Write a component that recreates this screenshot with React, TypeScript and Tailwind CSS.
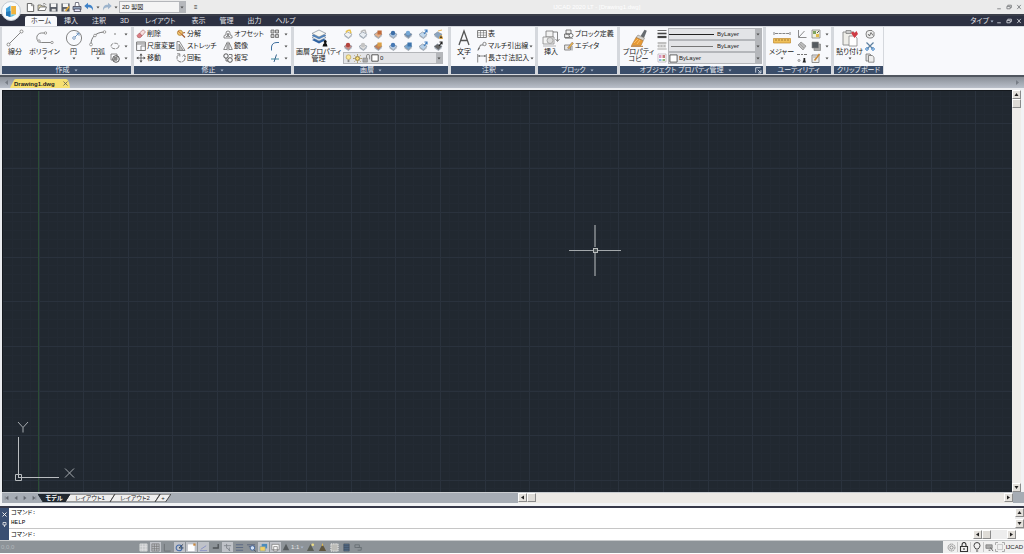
import React from "react";

type P = React.ReactNode;

const Svg = ({ w = 10, h, vb, children }: { w?: number; h?: number; vb?: string; children: P }) => (
  <svg width={w} height={h ?? w} viewBox={vb ?? "0 0 10 10"} fill="none" className="block shrink-0" aria-hidden="true">
    {children}
  </svg>
);

const Caret = ({ light = false }: { light?: boolean }) => (
  <svg width="4" height="3" viewBox="0 0 4 3" className="block shrink-0" aria-hidden="true">
    <path d="M0.5 0.5h3L2 2.5z" fill={light ? "#a9b8cc" : "#4a4a4a"} />
  </svg>
);

const page = (
  <Svg w={9}>
    <path d="M1.5.5h5l2 2v7h-7z" fill="#fff" stroke="#555" />
    <path d="M6 1v2h2" stroke="#555" strokeWidth=".7" />
  </Svg>
);
const folder = (
  <Svg w={10}>
    <path d="M1 8.5V3h3l1 1h3v4.5z" fill="#e8dfb8" stroke="#666" strokeWidth=".8" />
    <path d="M1 8.5l2-3.5h6.5L8 8.5z" fill="#fff" stroke="#666" strokeWidth=".8" />
    <path d="M6 2q2-1.5 3 .8" stroke="#666" strokeWidth=".7" />
  </Svg>
);
const disk = (
  <Svg w={9}>
    <path d="M.5.5h9v9h-9z" fill="#555a63" />
    <path d="M2 .5h6v4H2z" fill="#f5f5f5" />
    <path d="M3 6.5h4.5v3H3z" fill="#dcdcdc" />
  </Svg>
);
const diskPen = (
  <Svg w={9}>
    <path d="M.5.5h9v9h-9z" fill="#555a63" />
    <path d="M2 .5h6v4H2z" fill="#f5f5f5" />
    <path d="M3 6.5h3v3H3z" fill="#dcdcdc" />
    <path d="M5 9l4-5" stroke="#e2a938" strokeWidth="1.8" />
  </Svg>
);
const printer = (
  <Svg w={10}>
    <path d="M3 4.500L3.500.5h3l.8 4" fill="#fff" stroke="#556" strokeWidth=".8" />
    <path d="M1 4.500h8v3.200H1z" fill="#8fa0b8" stroke="#445" strokeWidth=".8" />
    <path d="M2.500 7h5.500l.7 2.500H2z" fill="#eef" stroke="#445" strokeWidth=".8" />
  </Svg>
);
const undo = (c: string) => (
  <Svg w={10}>
    <path d="M.3 4L4 .8v2c3.500-.1 5.300 1.800 5 6C8.200 6.300 6.700 5.300 4 5.300v2z" fill={c} />
  </Svg>
);

const bigLine = (
  <Svg w={18} vb="0 0 18 18">
    <path d="M3 15L15 3" stroke="#777" strokeWidth=".9" />
    <circle cx="2.500" cy="15.500" r="1.500" fill="#fff" stroke="#777" strokeWidth=".8" />
    <circle cx="15.500" cy="2.500" r="1.500" fill="#fff" stroke="#777" strokeWidth=".8" />
  </Svg>
);
const bigPoly = (
  <Svg w={18} vb="0 0 18 18">
    <path d="M9 4H5.500a4 4 0 0 0 0 9.500H16" stroke="#777" strokeWidth=".9" />
    <circle cx="9.500" cy="4" r="1.200" fill="#fff" stroke="#888" strokeWidth=".8" />
    <circle cx="3" cy="12" r="1.200" fill="#fff" stroke="#888" strokeWidth=".8" />
    <circle cx="16" cy="13.500" r="1.200" fill="#fff" stroke="#888" strokeWidth=".8" />
  </Svg>
);
const bigCircle = (
  <Svg w={18} vb="0 0 18 18">
    <circle cx="9" cy="9" r="7.600" stroke="#777" strokeWidth=".9" />
    <path d="M9 9l4.500-4.500" stroke="#5e88b8" strokeWidth=".9" />
    <circle cx="9" cy="9" r="1.300" fill="#fff" stroke="#5e88b8" strokeWidth=".8" />
    <path d="M11.500 4.200h2.500v2.500" stroke="#5e88b8" strokeWidth=".9" />
  </Svg>
);
const bigArc = (
  <Svg w={18} vb="0 0 18 18">
    <path d="M2 15C2 9 6 3.500 15 3" stroke="#777" strokeWidth="1" />
    <circle cx="2" cy="15.500" r="1.400" fill="#fff" stroke="#888" strokeWidth=".8" />
    <circle cx="6" cy="6.500" r="1.300" fill="#fff" stroke="#888" strokeWidth=".8" />
    <circle cx="15.500" cy="3" r="1.300" fill="#fff" stroke="#888" strokeWidth=".8" />
  </Svg>
);
const layersBig = (
  <Svg w={18} vb="0 0 18 18">
    <path d="M2 11l7-3.500 7 3.500-7 3.500z" fill="#2f62a3" />
    <path d="M2 8.500L9 5l7 3.500L9 12z" fill="#f4f6f8" stroke="#5d7591" strokeWidth=".6" />
    <path d="M2 6.500L9 3l7 3.500-7 3.500z" fill="#4d86c5" stroke="#3b6595" strokeWidth=".4" />
    <path d="M2 4.500L9 1l7 3.500L9 8z" fill="#f8f8f4" stroke="#687684" strokeWidth=".6" />
    <path d="M12.500 17.500l.8-2.500 1.200-1a1.500 1.500 0 1 1 1.500 0l.8 1 .7 2.500z" fill="#111" />
  </Svg>
);
const textA = (
  <Svg w={18} vb="0 0 18 18">
    <path d="M4 16L9 2l5 14M5.800 11.500h6.400" stroke="#555" strokeWidth="1.300" />
  </Svg>
);
const insertBig = (
  <Svg w={18} vb="0 0 18 18">
    <path d="M4 2h7v6H4z" fill="#f2f2f2" stroke="#777" strokeWidth=".8" />
    <path d="M1 8h11v7H1z" fill="#f4f4f4" stroke="#888" strokeWidth=".8" />
    <circle cx="8" cy="11.500" r="3" fill="#ddd" stroke="#999" strokeWidth=".8" />
    <path d="M11 3h4.500v9M13.500 10l2 2.500 2-2.500" stroke="#777" strokeWidth=".9" />
    <path d="M1 17h13" stroke="#999" strokeWidth=".7" />
  </Svg>
);
const brushBig = (
  <Svg w={18} vb="0 0 18 18">
    <path d="M14.500 .8l2.300 1L14 9l-3.500-1.800z" fill="#666b70" />
    <path d="M8 6l6.500 3.200-1.300 2.500L6 8.500z" fill="#d5d2cc" stroke="#77706a" strokeWidth=".5" />
    <path d="M6 8.500l7.200 3.200L11 16.500H1.500z" fill="#e79a35" stroke="#a86c28" strokeWidth=".5" />
    <path d="M4 14l4-4M7 15l3-4" stroke="#ffc878" strokeWidth=".8" />
    <path d="M1 17.300h12" stroke="#b9752b" />
  </Svg>
);
const measureBig = (
  <Svg w={18} vb="0 0 18 18">
    <path d="M1 3v3M17 3v3M2 4.500h14" stroke="#666" strokeWidth=".8" strokeDasharray="3 .7" />
    <path d="M.5 9.500h17v4.500H.5z" fill="#efc05b" stroke="#c28a2c" strokeWidth=".7" />
    <path d="M3 10v2M6 10v2M9 10v2M12 10v2M15 10v2" stroke="#8a5f1c" strokeWidth=".7" />
  </Svg>
);
const pasteBig = (
  <Svg w={18} vb="0 0 18 18">
    <path d="M2 3h11v13H2z" fill="#efeee9" stroke="#888" strokeWidth=".9" />
    <path d="M5 1.500h5v3H5z" fill="#ccc" stroke="#777" strokeWidth=".7" />
    <path d="M8 7h6l2 2v8H8z" fill="#fff" stroke="#888" strokeWidth=".8" />
    <path d="M10 4l2-1.500 1.500 1.500L15.500 2l1.500 3-3.500 4z" fill="#cf3b45" />
  </Svg>
);

const g = "#6e6e6e";
const dot = <Svg><circle cx="5" cy="5" r=".8" fill={g} /></Svg>;
const ellipse = <Svg><ellipse cx="5" cy="5" rx="4" ry="2.800" stroke={g} strokeWidth=".8" strokeDasharray="4 1" /></Svg>;
const hatch = (
  <Svg>
    <path d="M1 1h6v6H1z" stroke={g} strokeWidth=".8" />
    <circle cx="6" cy="6" r="3.300" stroke="#444" strokeWidth=".9" />
    <path d="M3.500 4h3.500v3.500H3.500z" fill="#888" />
  </Svg>
);
const eraser = (
  <Svg>
    <path d="M3.500 4L7 .8l2.500 2L6 7z" fill="#f7e0e0" stroke="#a66" strokeWidth=".6" />
    <path d="M3.500 4L6 7 4 8.800Q1 9 1 6.500z" fill="#dc7d86" stroke="#a55" strokeWidth=".6" />
  </Svg>
);
const scale = (
  <Svg>
    <path d="M.6 1h8.800v8.500H.6z" stroke={g} strokeWidth=".9" />
    <path d="M.6 3h8.800M5 5h4.400M5 5v4.500" stroke={g} strokeWidth=".8" />
    <path d="M1 1.500h8v1H1z" fill="#aaa" />
  </Svg>
);
const move = (
  <Svg>
    <path d="M5 1v8M1 5h8" stroke="#555" strokeWidth=".8" />
    <path d="M5 .3l1.500 2.100H3.500zM5 9.700l1.500-2.100H3.500zM.3 5l2.100-1.500v3zM9.700 5L7.600 3.500v3z" fill="#555" />
  </Svg>
);
const explode = (
  <Svg>
    <circle cx="4" cy="3.800" r="2.600" fill="#f0c46c" stroke="#a87b33" strokeWidth=".7" />
    <path d="M6 5.500l3 3M7 4l2-.500" stroke="#a45a2c" strokeWidth="1.200" />
    <path d="M2 2l4 3.500" stroke="#b4502d" strokeWidth=".7" />
  </Svg>
);
const stretch = (
  <Svg>
    <path d="M1 9.500v-9h2.500L9 9.500z" stroke={g} strokeWidth=".8" />
    <path d="M3 9V3l4 6" fill="#bbb" stroke={g} strokeWidth=".7" />
  </Svg>
);
const rotate = (
  <Svg>
    <path d="M3 1.500A4 4 0 0 0 5 9a4 4 0 0 0 3.500-6" stroke={g} strokeWidth=".9" strokeDasharray="5 .8" />
    <path d="M1 .8h2.800v2.800M9.500 4.200L8.300 1.500 6.500 3.500" stroke={g} strokeWidth=".8" />
  </Svg>
);
const offset = (
  <Svg>
    <path d="M1 9V7q0-1 2-1V4a2 2 0 1 1 4 0v2q2 0 2 1v2z" stroke={g} strokeWidth=".8" />
    <path d="M3 7.500h1.500V4.500h1v3H7" stroke={g} strokeWidth=".8" />
  </Svg>
);
const mirror = (
  <Svg>
    <path d="M4 1.500V8.500H.7zM6 1.500V8.500h3.300z" stroke={g} strokeWidth=".8" />
    <path d="M5 .5v9" stroke={g} strokeWidth=".6" />
  </Svg>
);
const copy = (
  <Svg>
    <circle cx="3" cy="3" r="2.200" stroke="#444" strokeWidth=".9" />
    <circle cx="7" cy="7" r="2.300" stroke="#444" strokeWidth=".9" />
    <path d="M3 5v3h2M6 1.500h3v3" stroke="#555" strokeWidth=".8" />
  </Svg>
);
const array = (
  <Svg>
    <path d="M1 1h3v3H1zM5.500 1h3v3h-3zM1 5.500h3v3H1zM5.500 5.500h3v3h-3z" fill="#ccc" stroke="#666" strokeWidth=".8" />
  </Svg>
);
const fillet = <Svg><path d="M1.500 9.500V6Q2 1.500 7 1.500h2" stroke="#3e6f9e" strokeWidth="1" /></Svg>;
const trim = (
  <Svg>
    <path d="M1 6h8" stroke="#3e8a9e" strokeWidth="1" />
    <path d="M6.500 1.500L4 9" stroke="#36638c" strokeWidth="1" />
  </Svg>
);

/* A small layer sheet with a coloured mark that tells the layer tools apart. */
const layerTool = (mark: string, sheet: string, kind: number) => (
  <Svg>
    <path d="M1 5.500L4.500 3 9 5.200 5.500 9z" fill={sheet} stroke="#778494" strokeWidth=".6" />
    <path d="M1.500 7l4 2.500L9 6.500" stroke="#8d98a5" strokeWidth=".7" />
    {kind === 0 && <path d="M3 3.500Q4 .8 7 1.200l1 3" stroke={mark} strokeWidth="1.500" />}
    {kind === 1 && <path d="M4.500 1.500h4.200v4H4.500z" fill={mark} />}
    {kind === 2 && <circle cx="5" cy="4" r="2.200" fill={mark} />}
    {kind === 3 && <path d="M6 5l3-4M6.500 1H9v2.500" stroke={mark} strokeWidth="1.200" />}
    {kind === 4 && <path d="M6.500 9.500q.3-3 1.500-3t1.500 3zM5 2l4-1" fill="#222" stroke={mark} strokeWidth=".9" />}
  </Svg>
);
const layerTools: { n: string; i: P }[] = [
  { n: "画層表示", i: layerTool("#e8c04c", "#f3f3f3", 0) },
  { n: "画層非表示", i: layerTool("#b9b9b9", "#e8edf2", 0) },
  { n: "画層ロック", i: layerTool("#c06b3b", "#e3b08a", 1) },
  { n: "画層選択", i: layerTool("#3c6ea8", "#a9c4e2", 2) },
  { n: "画層フリーズ", i: layerTool("#74a7d6", "#6a8db2", 2) },
  { n: "現在層に変更", i: layerTool("#3e7dc0", "#c2d9ee", 3) },
  { n: "画層結合", i: layerTool("#e8a93c", "#8aa4c0", 4) },
  { n: "画層オフ", i: layerTool("#b4443e", "#cc8a84", 2) },
  { n: "画層オン", i: layerTool("#c4c4c4", "#dcdcdc", 2) },
  { n: "ロック解除", i: layerTool("#dba047", "#c07f58", 1) },
  { n: "画層検索", i: layerTool("#4679b5", "#bcd0e6", 2) },
  { n: "画層コピー", i: layerTool("#3d74ad", "#78a6d0", 1) },
  { n: "画層移動", i: layerTool("#3e7dc0", "#b7d0e8", 3) },
  { n: "画層削除", i: layerTool("#222", "#666", 3) },
];

const table = (
  <Svg>
    <path d="M.6 1.500h8.800v7H.6z" fill="#fff" stroke={g} strokeWidth=".9" />
    <path d="M.6 3.800h8.800M.6 6.200h8.800M3.500 1.500v7M6.500 1.500v7" stroke={g} strokeWidth=".6" />
  </Svg>
);
const mleader = (
  <Svg>
    <path d="M1 9.500L3.500 4H6" stroke={g} strokeWidth=".9" />
    <circle cx="7.500" cy="3" r="1.700" stroke={g} strokeWidth=".8" />
    <path d="M.5 9.500L1.300 6.500l1.600 1z" fill={g} />
  </Svg>
);
const dim = (
  <Svg>
    <path d="M.7 1v8.500M9.300 1v8.500M1 3h8" stroke={g} strokeWidth=".8" />
    <path d="M1 3l2-1v2zM9 3L7 2v2z" fill={g} />
  </Svg>
);
const blockDef = (
  <Svg>
    <path d="M2 1h5v4H2zM.6 5h5v3.500h-5z" fill="#eee" stroke="#555" strokeWidth=".8" />
    <circle cx="7" cy="6.500" r="2" fill="#fff" stroke="#555" strokeWidth=".8" />
    <path d="M1 9.500h8" stroke="#777" strokeWidth=".6" />
  </Svg>
);
const editor = (
  <Svg>
    <path d="M.6 4h6v5h-6z" fill="#e8e8e8" stroke={g} strokeWidth=".8" />
    <path d="M3.500 7L8 1.200l1.500 1.100L5 8z" fill="#e5b54a" stroke="#866" strokeWidth=".5" />
    <path d="M8 5v4.500" stroke={g} strokeWidth=".8" />
  </Svg>
);
const weight = <Svg><path d="M.5 1.500h9" stroke="#444" strokeWidth=".8" /><path d="M.5 4.500h9" stroke="#444" strokeWidth="1.600" /><path d="M.5 8h9" stroke="#444" strokeWidth="2.200" /></Svg>;
const linetype = (
  <Svg>
    <path d="M1 1h8v8H1z" fill="#e4e4e4" />
    <path d="M.5 2h9" stroke="#888" strokeWidth=".8" />
    <path d="M.5 5h9" stroke="#888" strokeDasharray="2 1" strokeWidth=".9" />
    <path d="M.5 8h9" stroke="#888" strokeDasharray="1 1" strokeWidth=".9" />
  </Svg>
);
const palette = (
  <Svg>
    <path d="M1 1h8v8H1z" fill="#fff" stroke="#a69aa6" strokeWidth=".6" />
    <path d="M2 2h2.500v3H2z" fill="#d99ac8" />
    <path d="M2 6h2.500v2H2z" fill="#8cb6dd" />
    <path d="M5.500 2h2.500v3H5.500z" fill="#c67d7d" />
    <path d="M5.500 6h2.500v2H5.500z" fill="#89bb78" />
  </Svg>
);
const axis = <Svg><path d="M1.500 1v7.500h8M2 8l5.500-6" stroke={g} strokeWidth=".8" /></Svg>;
const quick = (
  <Svg>
    <path d="M1 1h8v8H1z" fill="#eef0dd" stroke="#777" strokeWidth=".7" />
    <path d="M2 2h3v3H2z" fill="#7fa45f" />
    <path d="M5 5h3v3H5z" fill="#e3bd4b" />
    <path d="M6 4l2-2" stroke="#555" />
  </Svg>
);
const area = (
  <Svg>
    <path d="M1 4l3-3 5 4-3 4z" fill="#bbb" stroke="#888" strokeWidth=".7" />
    <path d="M3 3l4 4M2 5l3 3" stroke="#999" strokeWidth=".7" />
  </Svg>
);
const stack = (
  <Svg>
    <path d="M3 3h6.500v6.500H3z" fill="#aaa" stroke="#777" strokeWidth=".6" />
    <path d="M1 1h6.500v6H1z" fill="#555b60" stroke="#888" strokeWidth=".6" />
  </Svg>
);
const ident = (
  <Svg>
    <path d="M0 1.500h3M4 1.500h2M7 1.500h3" stroke="#777" strokeWidth="1" />
    <circle cx="2" cy="7.500" r="1" stroke="#555" strokeWidth=".6" />
    <path d="M5.500 9.500h3.500l-.8-2.500V5H6.500v2z" fill="#222" />
  </Svg>
);
const edit = (
  <Svg>
    <path d="M1 2h7v7.500H1z" fill="#eee" stroke="#777" strokeWidth=".8" />
    <path d="M3.500 7.500L8.500 1" stroke="#c88b3a" strokeWidth="1.600" />
    <path d="M2 4h3" stroke="#888" strokeWidth=".7" />
  </Svg>
);
const clipView = (
  <Svg>
    <path d="M1 5q0-3.500 3-3.500h3l2 2V7q-1 2-3 2H4Q1 9 1 5z" fill="#eee" stroke="#666" strokeWidth=".8" />
    <path d="M3 5l1.500 2L6 3.500l2 3" stroke="#555" strokeWidth=".8" />
  </Svg>
);
const scissors = (
  <Svg>
    <path d="M1.500 1.500l6 6M8.500 1.500l-6 6" stroke="#5c7f9f" strokeWidth="1.200" />
    <circle cx="2" cy="8" r="1.300" stroke="#3f82c5" />
    <circle cx="8" cy="8" r="1.300" stroke="#3f82c5" />
  </Svg>
);
const copies = (
  <Svg>
    <path d="M1 1h4l1.500 1.500V8H1z" fill="#ddd" stroke="#666" strokeWidth=".7" />
    <path d="M3.500 2.500h3.800l1.700 1.700v5H3.500z" fill="#eee" stroke="#666" strokeWidth=".7" />
  </Svg>
);

const Panel = ({ title, cls, menu = true, launch = false, children }: { title: string; cls: string; menu?: boolean; launch?: boolean; children: P }) => (
  <section className={`flex shrink-0 flex-col ${cls}`}>
    <div className="flex h-[39px] bg-[#f8f9fc] pt-px">{children}</div>
    <h2 className="flex h-2 items-center justify-center gap-1 bg-[#3a4d69] text-[7px] leading-[8px] text-[#e6ebf3]">
      <span className={launch ? "ml-auto" : ""}>{title}</span>
      {menu && <Caret light />}
      {launch && (
        <span className="ml-auto pr-px">
          <Svg w={7}><path d="M1 8V1h7M4 4l4 4M8.500 4.500v4h-4" stroke="#dfe6f0" strokeWidth="1.200" /></Svg>
        </span>
      )}
    </h2>
  </section>
);

const Big = ({ icon, lines, cls, arrow = false }: { icon: P; lines: string[]; cls: string; arrow?: boolean }) => (
  <button className={`flex shrink-0 flex-col items-center pt-px ${cls}`}>
    {icon}
    <span className="mt-px flex flex-col items-center leading-[7px]">
      {lines.map((l) => (
        <span key={l}>{l}</span>
      ))}
    </span>
    {arrow && <span className="mt-[2px]"><Caret /></span>}
  </button>
);

const Small = ({ icon, label, arrow = false, name }: { icon: P; label?: string; arrow?: boolean; name?: string }) => (
  <button aria-label={name} className="flex h-3 w-full items-center gap-px">
    {icon}
    {label && <span>{label}</span>}
    {arrow && <span className="ml-auto"><Caret /></span>}
  </button>
);

const Drop = ({ label, value, cls, pad, children }: { label: string; value: string; cls: string; pad: string; children?: P }) => (
  <span className={`relative flex items-center border border-[#b4b6ba] ${cls}`}>
    {children && <span className="pointer-events-none absolute inset-y-0 left-0 flex items-center">{children}</span>}
    <select aria-label={label} className={`h-full w-full appearance-none bg-transparent leading-none outline-none ${pad}`}>
      <option>{value}</option>
    </select>
    <span className="pointer-events-none absolute inset-y-0 right-0 flex w-[6px] items-center justify-center bg-[#b5b7bb]">
      <Caret />
    </span>
  </span>
);

const ScrollBtn = ({ name, d }: { name: string; d: string }) => (
  <button aria-label={name} className="flex h-[9px] w-[9px] shrink-0 items-center justify-center border border-[#8b8b8b] border-t-white border-l-white bg-[#e4e1dc]">
    <Svg w={5}><path d={d} fill="#222" /></Svg>
  </button>
);
const UP = "M5 2L9 8H1z";
const DOWN = "M5 8L1 2h8z";
const LEFT = "M2 5L8 1v8z";
const RIGHT = "M8 5L2 1v8z";
const Thumb = () => <span className="block h-[9px] w-[9px] shrink-0 border border-[#8b8b8b] border-t-white border-l-white bg-[#dedbd6]" />;

const WinButtons = ({ color }: { color: string }) => (
  <div className="flex items-center gap-1">
    {[
      ["最小化", "M2 8h6"],
      ["元に戻す", "M1.500 4h5.500v4H1.500zM3 4V2h6v4H7"],
      ["閉じる", "M2 1.500l6 7M8 1.500l-6 7"],
    ].map(([n, d]) => (
      <button key={n} aria-label={n}><Svg w={6}><path d={d} stroke={color} strokeWidth="1.400" /></Svg></button>
    ))}
  </div>
);

const MAJOR = 44.6;
const majors = Array.from({ length: 60 }, (_, i) => i);
const minors = Array.from({ length: 300 }, (_, i) => i);

const Canvas = () => (
  <main className="relative min-h-0 min-w-0 flex-1 overflow-hidden bg-[#212830]">
    <svg className="absolute inset-0 h-full w-full" shapeRendering="crispEdges" aria-hidden="true">
      {minors.map((i) => {
        const p = Math.round((i * MAJOR) / 5);
        return (
          <g key={i} fill="#232a33">
            <rect x={p + 1} y="0" width="1" height="100%" />
            <rect x="0" y={p + 6} width="100%" height="1" />
          </g>
        );
      })}
      {majors.map((i) => {
        const p = Math.round(i * MAJOR);
        return (
          <g key={i} fill="#2a323d">
            <rect x={p - 8} y="0" width="1" height="100%" />
            <rect x="0" y={p + 33} width="100%" height="1" />
          </g>
        );
      })}
      <rect x="36" y="0" width="1" height="100%" fill="#2b4d35" />
      <rect x="0" y="0" width="100%" height="1" fill="#15191e" />
      <rect x="0" y="0" width="1" height="100%" fill="#15191e" />
    </svg>
    <svg className="absolute bottom-0 left-2 h-18 w-18" viewBox="0 0 72 72" fill="none" stroke="#b9bdc0" aria-hidden="true">
      <path d="M8.500 58V17M8 57.500h41M5.500 54.500h6v6h-6z" />
      <path d="M8 2l5 5.500L18 2M13 7.500v5M55 48.500l9 9M64 48.500l-9 9" stroke="#a6abaf" />
    </svg>
    <svg className="absolute top-[134px] left-[567px] h-[52px] w-[52px]" viewBox="0 0 52 52" fill="none" aria-hidden="true">
      <path d="M26 1v22M26 29v23M0 26.500h24M28 26.500h24" stroke="#a3a8ab" strokeWidth="1.200" />
      <rect x="24.500" y="24.500" width="4" height="4" fill="#4c5355" stroke="#b9bdbd" />
    </svg>
  </main>
);

const Sheet = ({ label, cls, dark = false }: { label: string; cls: string; dark?: boolean }) => (
  <button className={`relative h-2 shrink-0 text-[6px] leading-[8px] ${cls} ${dark ? "z-10 font-bold text-white" : "text-[#222]"}`}>
    <svg className="absolute inset-0 h-full w-full" viewBox="0 0 50 8" preserveAspectRatio="none" aria-hidden="true">
      <path
        d={dark ? "M0 0L8 8H42L50 0z" : label === "+" ? "M17 0L0 8H33L50 0z" : "M5 0L0 8H45L50 0z"}
        fill={dark ? "#212830" : "#efefef"}
        stroke={dark ? "#212830" : "#444"}
        strokeWidth="1"
        vectorEffect="non-scaling-stroke"
      />
    </svg>
    <span className="relative">{label}</span>
  </button>
);

const statusIcons: { n: string; i: P; on?: boolean }[] = [
  { n: "スナップ", i: <path d="M1 1h8v8H1zM1 4h8M1 7h8M4 1v8M7 1v8" fill="#c4c7c9" stroke="#dfe1e2" strokeWidth=".8" /> },
  { n: "グリッド", on: true, i: <path d="M1 1h8v8H1zM1 3.700h8M1 6.400h8M3.700 1v8M6.400 1v8" stroke="#777" strokeWidth=".8" /> },
  { n: "直交", i: <path d="M1.500 1v8h7" stroke="#6c7275" /> },
  { n: "極", on: true, i: <><circle cx="4.500" cy="5.500" r="3.200" stroke="#456aa8" strokeWidth="1.200" /><path d="M4.500 5.500h5M4.500 5.500L9 1.500" stroke="#345" /></> },
  { n: "オブジェクトスナップ", on: true, i: <><path d="M1 1.500h7.500V9H1z" fill="#fff" /><path d="M7 .5h2.500V3H7z" fill="#c7873e" /></> },
  { n: "角度", on: true, i: <path d="M1 8.500h8M2 7l6-4" stroke="#8188c4" strokeWidth=".9" /> },
  { n: "ダイナミック入力", i: <path d="M2 5.500h6V1" stroke="#4e5356" strokeWidth="1.500" /> },
  { n: "トラッキング", on: true, i: <path d="M1 3h8M4 1v5M4 5l4 4M7 5v4" stroke="#80868c" /> },
  { n: "線の太さ", i: <path d="M1 2h8M1 5h8M1 8h8" stroke="#5d6b84" strokeWidth="1.200" /> },
  { n: "ズーム", i: <><path d="M0 2h9M2 4h7" stroke="#566279" /><circle cx="6" cy="5.500" r="2.500" fill="#d1e0f3" stroke="#416298" /><path d="M8 7.500L9.500 9.500" stroke="#345" /></> },
  { n: "ペーパー", on: true, i: <><path d="M3 1h6v5H3z" fill="#4a8abc" /><path d="M1 4h6v5H1z" fill="#f1cf63" stroke="#7799a8" strokeWidth=".7" /></> },
  { n: "モデル空間", on: true, i: <path d="M1 1.500h8v6H1zM3 4h4v5H3z" fill="#fafafa" stroke="#777" strokeWidth=".8" /> },
];
const statusTail: { n: string; i: P }[] = [
  { n: "注釈可視性", i: <><path d="M5 1L9 9H1z" fill="#5b5f57" /><circle cx="7.500" cy="2" r="1.500" fill="#eadb83" /></> },
  { n: "注釈自動", i: <><path d="M5 1L9 9H1z" fill="#5f553e" /><path d="M5 0l1 3H4z" fill="#edc24d" /></> },
  { n: "選択", i: <path d="M1 1h8v8H1z" fill="#bcbcb8" stroke="#f3f3f3" strokeDasharray="1.500 1" /> },
  { n: "計算機", i: <path d="M2 1h6v8H2zM2 3h6M2 5h6M2 7h6" fill="#536b86" stroke="#3c4857" strokeWidth=".6" /> },
  { n: "ハードウェア", i: <path d="M1 2h5v3H1zM4 5h4v3H4M8 5l1 1" stroke="#666d72" strokeWidth=".9" /> },
];

export default function App() {
  return (
    <div
      lang="ja"
      className="flex h-screen flex-col overflow-hidden bg-[#f4f4f4] font-['Liberation_Sans','Noto_Sans_CJK_JP',sans-serif] text-[7px] leading-[8px] text-[#222] [font-feature-settings:'palt'] [&_*]:whitespace-nowrap"
    >
      <header className="relative shrink-0">
        <div className="flex h-[14px] items-center bg-[#ebebeb] pr-[2px] pl-[26px]">
          <div className="flex w-[92px] shrink-0 items-center gap-[2px]">
            {[
              ["新規", page],
              ["開く", folder],
              ["保存", disk],
              ["名前を付けて保存", diskPen],
              ["印刷", printer],
              ["元に戻す", undo("#3f82c8")],
            ].map(([n, i]) => (
              <button key={n as string} aria-label={n as string} className="flex w-[10px] justify-center">{i}</button>
            ))}
            <Caret />
            <button aria-label="やり直し" className="-scale-x-100">{undo("#9db4cc")}</button>
            <Caret />
          </div>
          <Drop label="ワークスペース" value="2D 製図" cls="ml-px h-3 w-[67px] bg-[#f4f4f4] text-[6px]" pad="pl-[2px]" />
          <span className="ml-2 text-[6px]">≡</span>
          <h1 className="min-w-0 flex-1 text-center text-[6px] text-white">IJCAD 2020 LT - [Drawing1.dwg]</h1>
          <WinButtons color="#77797c" />
        </div>
        <nav className="flex h-3 items-end border-t-2 border-t-[#3a3e49] bg-[#2d3142] pr-[2px] pl-[25px] text-[#e2e4ea]">
          {["ホーム", "挿入", "注釈", "3D", "レイアウト", "表示", "管理", "出力", "ヘルプ"].map((t, i) => (
            <button
              key={t}
              className={
                i === 0 ? "h-[10px] rounded-t-xs bg-[#f8f9fc] px-[6px] text-[#333]" : i === 4 ? "h-[10px] px-[9px]" : "h-[10px] px-[7px]"
              }
            >
              {t}
            </button>
          ))}
          <div className="ml-auto flex h-[10px] items-center gap-[2px]">
            <button className="flex items-center gap-px">タイプ<Caret light /></button>
            <WinButtons color="#d5d8df" />
          </div>
        </nav>
        <button aria-label="アプリケーション" className="absolute top-px left-px flex h-5 w-5 items-center justify-center rounded-full border border-[#c4ccd4] bg-[#f7fafc]">
          <Svg w={14} vb="0 0 14 14">
            <path d="M2 4.500L6.500 1.500V13L2 11.500z" fill="#3f9fd8" />
            <path d="M2 8l4.500-1v6L2 11.500z" fill="#2378b8" />
            <path d="M7.200 2H12v8.500H7.200z" fill="#f0b43e" />
            <path d="M7.200 10.500H12L7.200 13z" fill="#5bc1dc" />
          </Svg>
        </button>
      </header>

      <div className="flex h-[51px] shrink-0 gap-[3px] border-b-2 border-[#50565f] bg-[#d5d8dd] pt-px pl-[2px]">
        <Panel title="作成" cls="w-[129px]">
          <Big icon={bigLine} lines={["線分"]} cls="w-[26px]" />
          <Big icon={bigPoly} lines={["ポリライン"]} cls="w-[33px]" arrow />
          <Big icon={bigCircle} lines={["円"]} cls="w-[25px]" arrow />
          <Big icon={bigArc} lines={["円弧"]} cls="w-6" arrow />
          <div className="w-[18px]">
            <Small icon={dot} name="点" arrow />
            <Small icon={ellipse} name="楕円" arrow />
            <Small icon={hatch} name="ハッチング" arrow />
          </div>
        </Panel>
        <Panel title="修正" cls="w-[157px]">
          <div className="ml-[2px] w-10">
            <Small icon={eraser} label="削除" />
            <Small icon={scale} label="尺度変更" />
            <Small icon={move} label="移動" />
          </div>
          <div className="w-[47px]">
            <Small icon={explode} label="分解" />
            <Small icon={stretch} label="ストレッチ" />
            <Small icon={rotate} label="回転" />
          </div>
          <div className="w-[47px]">
            <Small icon={offset} label="オフセット" />
            <Small icon={mirror} label="鏡像" />
            <Small icon={copy} label="複写" />
          </div>
          <div className="w-[18px]">
            <Small icon={array} name="配列" arrow />
            <Small icon={fillet} name="フィレット" arrow />
            <Small icon={trim} name="トリム" arrow />
          </div>
        </Panel>
        <Panel title="画層" cls="w-[154px]">
          <Big icon={layersBig} lines={["画層プロパティ", "管理"]} cls="w-[49px]" />
          <div>
            <div className="grid grid-cols-7">
              {layerTools.map((t) => (
                <button key={t.n} aria-label={t.n} className="flex h-3 w-[15px] items-center">{t.i}</button>
              ))}
            </div>
            <Drop label="画層" value="0" cls="h-3 w-[100px] bg-[#e3e4e7] text-[6px]" pad="pl-[36px]">
              <Svg w={9}><circle cx="5" cy="3.500" r="2.600" fill="#fae99a" stroke="#b59b4a" strokeWidth=".7" /><path d="M4 6.500h2v2.500H4z" fill="#888" /></Svg>
              <Svg w={9}><circle cx="5" cy="5" r="2.200" fill="#f7dc79" stroke="#8d7635" /><path d="M5 0v2M5 8v2M0 5h2M8 5h2M1.500 1.500l1.200 1.200M7.300 7.300l1.200 1.200M8.500 1.500L7.300 2.700M1.500 8.500l1.200-1.200" stroke="#9c8038" strokeWidth=".8" /></Svg>
              <Svg w={9}><path d="M1 4.500h5V9H1z" fill="#aaa" stroke="#777" strokeWidth=".6" /><path d="M5 4.500V2q0-1.500 1.700-1.500T8.500 2v4" stroke="#888" strokeWidth="1.100" /></Svg>
              <Svg w={8}><path d="M1 1h8v8H1z" fill="#fff" stroke="#333" /></Svg>
            </Drop>
          </div>
        </Panel>
        <Panel title="注釈" cls="w-[84px]">
          <Big icon={textA} lines={["文字"]} cls="w-[26px]" arrow />
          <div className="w-[56px]">
            <Small icon={table} label="表" />
            <Small icon={mleader} label="マルチ引出線" arrow />
            <Small icon={dim} label="長さ寸法記入" arrow />
          </div>
        </Panel>
        <Panel title="ブロック" cls="w-[79px]">
          <Big icon={insertBig} lines={["挿入"]} cls="w-[26px]" />
          <div>
            <Small icon={blockDef} label="ブロック定義" />
            <Small icon={editor} label="エディタ" />
          </div>
        </Panel>
        <Panel title="オブジェクト プロパティ管理" cls="w-[143px]" launch>
          <Big icon={brushBig} lines={["プロパティ", "コピー"]} cls="w-[37px]" />
          <div className="flex flex-col">
            {[weight, linetype, palette].map((i, k) => <span key={k} className="flex h-3 w-[11px] items-center">{i}</span>)}
          </div>
          <div className="flex w-[94px] flex-col text-[6px]">
            <Drop label="線の太さ" value="ByLayer" cls="h-3 w-full bg-[#e3e4e7]" pad="pl-[48px]">
              <span className="h-px w-[45px] bg-[#222]" />
            </Drop>
            <Drop label="線種" value="ByLayer" cls="h-3 w-full bg-[#e3e4e7]" pad="pl-[48px]">
              <span className="ml-[2px] h-px w-[42px] bg-[#777]" />
            </Drop>
            <Drop label="色" value="ByLayer" cls="h-3 w-full bg-[#e3e4e7]" pad="pl-[10px]">
              <Svg w={9}><path d="M1 1h8v8H1z" fill="#fff" stroke="#555" /></Svg>
            </Drop>
          </div>
        </Panel>
        <Panel title="ユーティリティ" cls="w-[65px]" menu={false}>
          <Big icon={measureBig} lines={["メジャー"]} cls="w-[31px]" arrow />
          <div className="w-[14px]">
            <Small icon={axis} name="位置" />
            <Small icon={area} name="面積" />
            <Small icon={ident} name="点情報" />
          </div>
          <div className="w-[18px]">
            <Small icon={quick} name="クイック選択" arrow />
            <Small icon={stack} name="表示順序" arrow />
            <Small icon={edit} name="編集" arrow />
          </div>
        </Panel>
        <Panel title="クリップボード" cls="w-[49px]" menu={false}>
          <Big icon={pasteBig} lines={["貼り付け"]} cls="w-[31px]" arrow />
          <div className="w-[10px]">
            <Small icon={clipView} name="クリップ表示" />
            <Small icon={scissors} name="切り取り" />
            <Small icon={copies} name="コピー" />
          </div>
        </Panel>
        <div className="-ml-[2px] flex-1 bg-[#f8f9fc]" />
      </div>

      <div className="flex h-[13px] shrink-0 items-start border-b-2 border-[#eceef1] bg-linear-to-b from-[#8a9098] to-[#b9bfc9] pr-1 pl-1">
        <Svg w={6} h={10} vb="0 0 6 10"><path d="M4 3v5L1 5.500z" fill="#777d86" /></Svg>
        <div className="relative mt-[2px] flex h-[9px] w-[60px] items-center justify-between pr-[2px] pl-[4px]">
          <svg className="absolute inset-0 h-full w-full" viewBox="0 0 60 9" preserveAspectRatio="none" aria-hidden="true">
            <path d="M0 9L4 1q.5-1 2-1h50q3 0 4 9z" fill="#f6df70" />
          </svg>
          <button className="relative text-[6px] font-bold text-[#222]">Drawing1.dwg</button>
          <button aria-label="図面を閉じる" className="relative"><Svg w={5}><path d="M1 1l8 8M9 1L1 9" stroke="#555" strokeWidth="1.600" /></Svg></button>
        </div>
        <span className="ml-auto"><Svg w={5} h={10} vb="0 0 5 10"><path d="M1 3v5l3-2.500z" fill="#777d86" /></Svg></span>
      </div>

      <div className="flex min-h-0 flex-1 border-l-2 border-[#e9ebee]">
        <Canvas />
        <div className="flex w-[9px] shrink-0 flex-col items-center bg-[#efedea]">
          <ScrollBtn name="上へスクロール" d={UP} />
          <Thumb />
          <span className="flex-1" />
          <ScrollBtn name="下へスクロール" d={DOWN} />
        </div>
        <div className="w-[3px] bg-[#f2f3f5]" />
      </div>

      <div className="flex h-[14px] shrink-0 border-b-3 border-l-2 border-[#f2f3f5] bg-[#a6acb4]">
        <div className="flex min-w-0 flex-[51] items-start border-t border-[#c9ccd0] pt-px">
          <div className="flex w-9 items-center">
            {["M3 5l4-3v6zM2 2v6", "M3 5l4-3v6z", "M7 5L3 2v6z", "M7 5L3 2v6zM8 2v6"].map((d, i) => (
              <button key={i} aria-label={["最初", "前", "次", "最後"][i]} className="flex h-2 w-[9px] items-center justify-center">
                <Svg w={6}><path d={d} fill="#61666d" stroke="#61666d" strokeWidth=".6" /></Svg>
              </button>
            ))}
          </div>
          <Sheet label="モデル" cls="w-8" dark />
          <Sheet label="レイアウト1" cls="-ml-[5px] w-[50px]" />
          <Sheet label="レイアウト2" cls="-ml-[5px] w-[50px]" />
          <Sheet label="+" cls="-ml-[5px] w-4" />
        </div>
        <div className="flex min-w-0 flex-[49] items-start justify-between border-t border-[#c9ccd0] bg-[#ece9e5]">
          <div className="flex"><ScrollBtn name="左へスクロール" d={LEFT} /><Thumb /></div>
          <ScrollBtn name="右へスクロール" d={RIGHT} />
        </div>
        <div className="w-[11px] shrink-0" />
      </div>

      <section className="flex h-[34px] shrink-0 border-t-2 border-[#363848] bg-white">
        <div className="flex w-[9px] shrink-0 flex-col items-center gap-[5px] bg-[#3a4f72] pt-1">
          <button aria-label="コマンドを閉じる"><Svg w={5}><path d="M1 1l8 8M9 1L1 9" stroke="#eee" strokeWidth="2" /></Svg></button>
          <button aria-label="固定"><Svg w={5}><path d="M2 1h6v5H2zM5 6v4" stroke="#eee" strokeWidth="1.600" /></Svg></button>
        </div>
        <div className="flex min-w-0 flex-1 flex-col text-[6px] text-black">
          <div className="flex h-[21px] border-b border-[#c6c6c6]">
            <div className="flex-1 pl-[2px] font-['Liberation_Mono','Noto_Sans_CJK_JP',monospace] leading-[10px]">
              <p>コマンド:</p>
              <p>HELP</p>
            </div>
            <div className="flex w-[9px] flex-col items-center justify-between bg-[#ededed]">
              <ScrollBtn name="履歴を上へ" d={UP} />
              <ScrollBtn name="履歴を下へ" d={DOWN} />
            </div>
          </div>
          <div className="flex flex-1 items-center">
            <label htmlFor="cmd" className="pl-[2px] font-['Liberation_Mono','Noto_Sans_CJK_JP',monospace]">コマンド:</label>
            <input id="cmd" className="h-2 min-w-0 flex-1 pl-[2px] outline-none" />
            <div className="flex w-[43px] items-center bg-[#ededed]">
              <ScrollBtn name="左へ" d={LEFT} /><Thumb />
              <span className="flex-1" />
              <ScrollBtn name="右へ" d={RIGHT} />
            </div>
            <span className="w-[8px]" />
          </div>
        </div>
      </section>

      <footer className="flex h-[14px] shrink-0 border-t border-b border-t-[#c9cbcd] border-b-white bg-[#8d9398]">
        <div className="flex flex-1 items-center">
          <span className="w-[138px] pl-px text-[6px] text-[#b4b9bd]">0,0,0</span>
          {statusIcons.map((s) => (
            <button key={s.n} aria-label={s.n} className={s.on ? "mr-px flex h-[10px] w-[11px] items-center justify-center bg-[#bfc2c8]" : "mr-px flex h-[10px] w-[11px] items-center justify-center"}>
              <Svg w={9}>{s.i}</Svg>
            </button>
          ))}
          <button className="flex w-[22px] items-center gap-px text-[6px] text-[#e5e5e5]">
            <Svg w={8}><path d="M5 1L9 9H1z" fill="#565b5e" /></Svg>1:1<Caret light />
          </button>
          {statusTail.map((s) => (
            <button key={s.n} aria-label={s.n} className="flex h-[10px] w-3 items-center justify-center"><Svg w={9}>{s.i}</Svg></button>
          ))}
        </div>
        <div className="flex w-[81px] shrink-0 items-center justify-end gap-px bg-[#f0f0f0] pr-px">
          <Svg w={9}><circle cx="5" cy="5" r="3.800" stroke="#777" strokeWidth=".9" strokeDasharray="2 .5" /><circle cx="5" cy="5" r="1.800" stroke="#777" strokeWidth=".9" /></Svg>
          <i className="h-[10px] w-px bg-[#c8c8c8]" />
          <Svg w={10}><path d="M1.500 4.500h7v5h-7zM3 4.500V3q0-2.500 2-2.500T7 3v1.500M5 6v2" stroke="#333" strokeWidth="1.100" /></Svg>
          <i className="h-[10px] w-px bg-[#c8c8c8]" />
          <Svg w={10}><path d="M3.800 7Q2 5 2 3.500a3 3 0 0 1 6 0Q8 5 6.200 7zM4 9h2.200" stroke="#444" /></Svg>
          <i className="h-[10px] w-px bg-[#c8c8c8]" />
          <Svg w={9}><path d="M1 2h7v4H1z" fill="#aaa" stroke="#777" strokeWidth=".8" /><path d="M4 8h2M6 5l3 4" stroke="#555" /></Svg>
          <Svg w={10}><path d="M2.500 2.500h5v5h-5z" stroke="#bbb" strokeWidth=".7" /><path d="M.5 3V.5H3M7 .5h2.500V3M9.500 7v2.500H7M3 9.500H.5V7" stroke="#999" strokeWidth=".8" /></Svg>
          <span className="text-[6px]">IJCAD</span>
        </div>
      </footer>
    </div>
  );
}
